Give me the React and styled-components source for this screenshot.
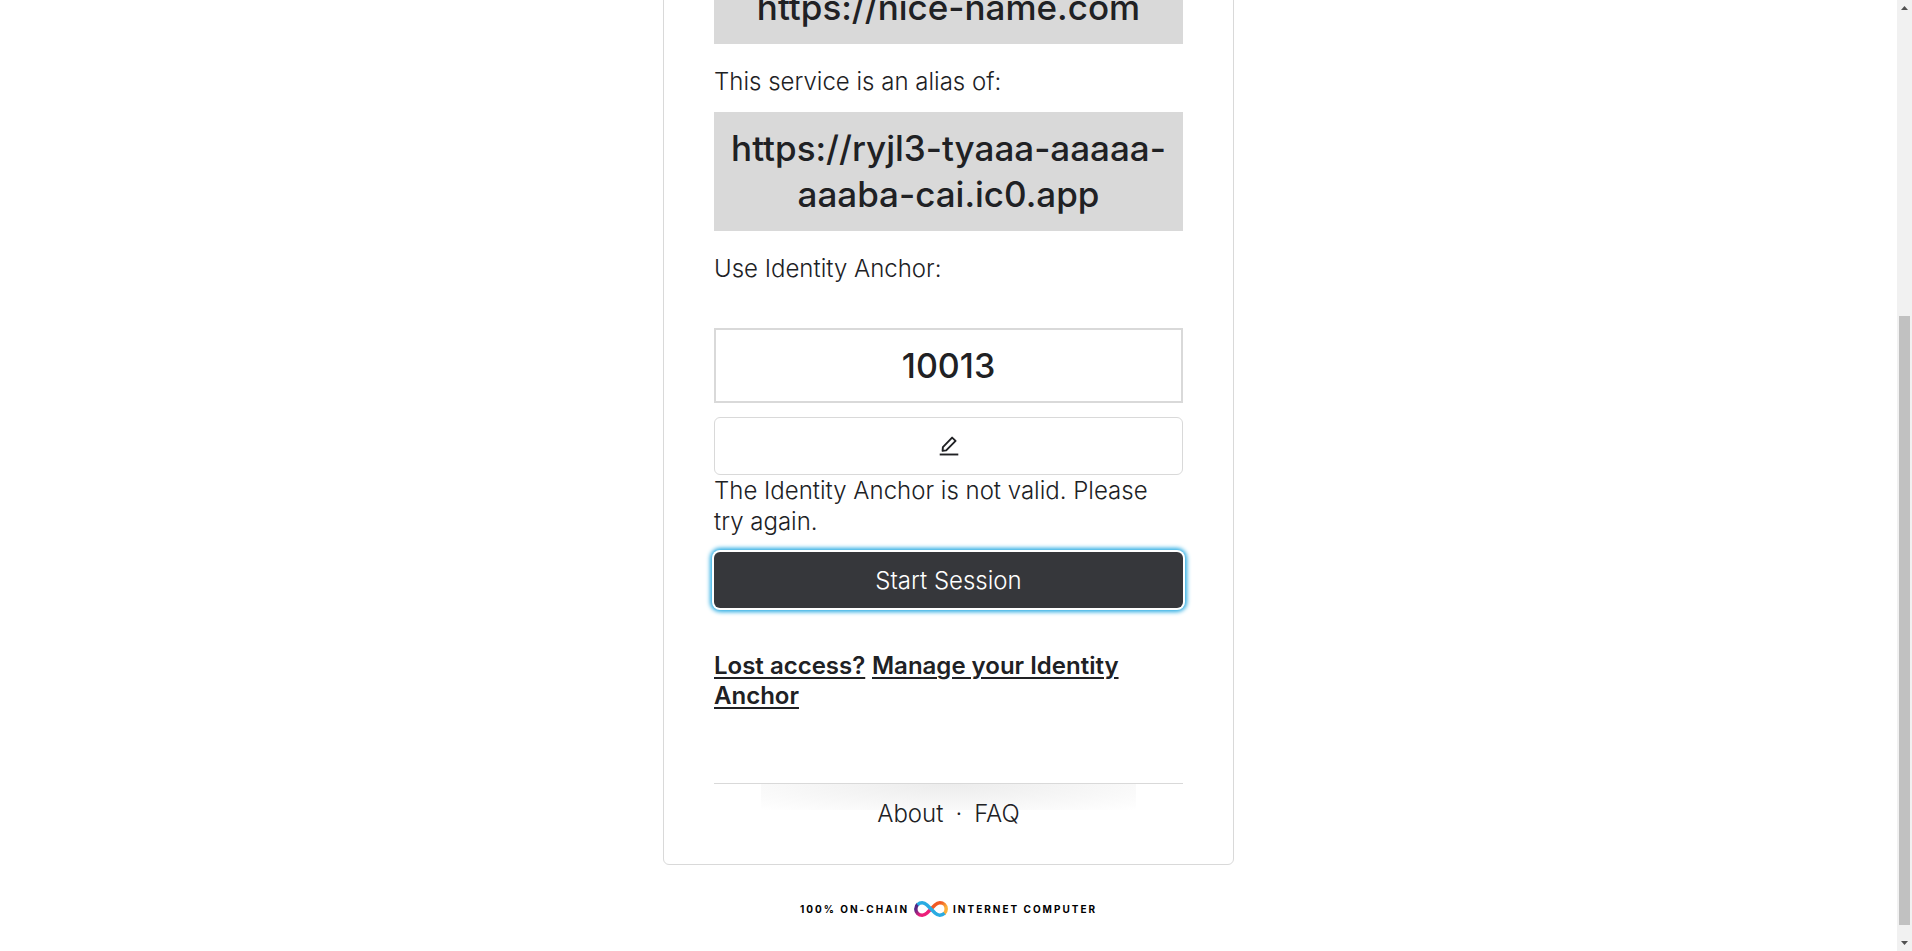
import React from "react";
import styled, { createGlobalStyle } from "styled-components";

const GlobalStyle = createGlobalStyle`
  *, *::before, *::after { box-sizing: border-box; }
  body {
    margin: 0;
    background: #fff;
    color: #202124;
    font-family: Inter, "Liberation Sans", sans-serif;
    font-size: 24px;
    font-weight: 300;
    line-height: 31px;
  }
`;

const Window = styled.div`
  display: flex;
  height: 100vh;
  overflow: hidden;
`;

const Page = styled.div`
  flex: 1;
  min-width: 0;
  display: flex;
  flex-direction: column;
  align-items: center;
  justify-content: flex-end;
`;

const Card = styled.main`
  flex: none;
  width: 100%;
  max-width: 571px;
  padding: 50px;
  padding-bottom: 35px;
  border: 1px solid #d9d9d9;
  border-radius: 6px;
`;

const Origin = styled.div`
  padding: 13px 16px 14px;
  background: #d9d9d9;
  font-size: 35px;
  font-weight: 500;
  line-height: 46px;
  text-align: center;
`;

const Note = styled.p`
  margin: 22px 0 15px;
`;

const Label = styled.label`
  display: block;
  margin: 22px 0 44px;
`;

const AnchorInput = styled.input`
  display: block;
  width: 100%;
  height: 75px;
  padding: 0 16px;
  border: 2px solid #d9d9d9;
  border-radius: 0;
  background: #fff;
  color: inherit;
  font: inherit;
  font-size: 34px;
  font-weight: 500;
  text-align: center;
`;

const Button = styled.button`
  display: flex;
  align-items: center;
  justify-content: center;
  width: 100%;
  height: ${(p) => (p.$primary ? 56 : 58)}px;
  margin-top: ${(p) => (p.$primary ? 15 : 14)}px;
  padding: 0;
  border: ${(p) => (p.$primary ? "none" : "1px solid #d9d9d9")};
  border-radius: 6px;
  background: ${(p) => (p.$primary ? "#36373b" : "#fff")};
  color: ${(p) => (p.$primary ? "#fff" : "#202124")};
  font: inherit;
  box-shadow: ${(p) => (p.$primary ? "0 0 0 2px #fff, 0 0 4px 4px #29abe2" : "none")};
`;

const ErrorText = styled.p`
  margin: 0;
`;

const Links = styled.p`
  margin: 43px 0 0;
  line-height: 30px;
`;

const TextLink = styled.a`
  color: inherit;
  font-weight: 600;
  text-decoration: underline;
  text-decoration-thickness: 2px;
  text-underline-offset: 3px;
  text-decoration-skip-ink: auto;
`;

const FooterNav = styled.nav`
  position: relative;
  display: flex;
  justify-content: center;
  gap: 12px;
  margin-top: 72px;
  padding-top: 14px;
  border-top: 1px solid #d9d9d9;

  &::before {
    content: "";
    position: absolute;
    top: 0;
    left: 10%;
    right: 10%;
    height: 26px;
    background: radial-gradient(ellipse at top, #ececec 0%, rgba(255, 255, 255, 0) 100%);
    z-index: -1;
  }
`;

const NavLink = styled.a`
  color: inherit;
  text-decoration: none;
`;

const Brand = styled.footer`
  flex: none;
  display: flex;
  align-items: center;
  gap: 5px;
  margin: 36px 0 34px;
  color: #000;
  font-size: 10px;
  font-weight: 700;
  line-height: 16px;
  letter-spacing: 2px;
  white-space: nowrap;
`;

const Scrollbar = styled.div`
  flex: none;
  width: 15px;
  display: flex;
  flex-direction: column;
  align-items: center;
  padding: 6px 0;
  background: #f1f1f1;
`;

const Track = styled.div`
  flex: 1;
  display: flex;
  flex-direction: column;
  justify-content: flex-end;
  margin: 6px 0 16px;
`;

const Thumb = styled.div`
  width: 11px;
  height: 67%;
  background: #c1c1c1;
`;

const PencilIcon = () => (
  <svg width="20" height="20" viewBox="0 0 20 20" fill="none" stroke="#202124" strokeWidth="1.9" aria-hidden="true">
    <path d="M3.6 14.8L3.9 11.2L13.1 1.6L16.6 4.9L7.2 14.4Z" strokeLinejoin="round" />
    <path d="M0.7 18.5H19.3" />
  </svg>
);

const InfinityLogo = () => (
  <svg width="34" height="16" viewBox="0 0 34 16" fill="none" strokeWidth="3.5" aria-hidden="true">
    <defs>
      <linearGradient id="pink" x1="3" y1="3" x2="12" y2="14" gradientUnits="userSpaceOnUse">
        <stop offset="0.2" stopColor="#522785" />
        <stop offset="0.75" stopColor="#ed1e79" />
      </linearGradient>
      <linearGradient id="orange" x1="22" y1="3" x2="32" y2="12" gradientUnits="userSpaceOnUse">
        <stop offset="0.2" stopColor="#f15a24" />
        <stop offset="0.7" stopColor="#fbb03b" />
      </linearGradient>
    </defs>
    <path d="M17 8L13 12C11.4 13.5 10 14.2 8.2 14.2C4.5 14.2 1.8 11.5 1.8 8C1.8 6 2.6 4.4 4 3.2" stroke="url(#pink)" />
    <path d="M17 8L21 4C22.6 2.5 24 1.8 25.8 1.8C29.5 1.8 32.2 4.5 32.2 8C32.2 10 31.4 11.6 30 12.8" stroke="url(#orange)" />
    <path d="M3.5 3.7C4.8 2.5 6.4 1.8 8.2 1.8C10 1.8 11.4 2.5 13 4L21 12C22.6 13.5 24 14.2 25.8 14.2C27.6 14.2 29.2 13.5 30.5 12.3" stroke="#29abe2" />
  </svg>
);

const Arrow = ({ down }) => (
  <svg width="7" height="4" viewBox="0 0 7 4" fill="#505050" aria-hidden="true">
    <path d={down ? "M0 0H7L3.5 4Z" : "M0 4H7L3.5 0Z"} />
  </svg>
);

export default function App() {
  return (
    <>
      <GlobalStyle />
      <Window>
        <Page>
          <Card>
            <Origin>https://nice-name.com</Origin>
            <Note>This service is an alias of:</Note>
            <Origin>https://ryjl3-tyaaa-aaaaa-aaaba-cai.ic0.app</Origin>
            <Label htmlFor="anchor">Use Identity Anchor:</Label>
            <AnchorInput id="anchor" defaultValue="10013" />
            <Button type="button" aria-label="Edit">
              <PencilIcon />
            </Button>
            <ErrorText>The Identity Anchor is not valid. Please try again.</ErrorText>
            <Button type="button" $primary>Start Session</Button>
            <Links>
              <TextLink href="#lost">Lost access?</TextLink>{" "}
              <TextLink href="#manage">Manage your Identity Anchor</TextLink>
            </Links>
            <FooterNav>
              <NavLink href="#about">About</NavLink>
              <span>·</span>
              <NavLink href="#faq">FAQ</NavLink>
            </FooterNav>
          </Card>
          <Brand>
            <span>100% ON-CHAIN</span>
            <InfinityLogo />
            <span>INTERNET COMPUTER</span>
          </Brand>
        </Page>
        <Scrollbar aria-hidden="true">
          <Arrow />
          <Track>
            <Thumb />
          </Track>
          <Arrow down />
        </Scrollbar>
      </Window>
    </>
  );
}
